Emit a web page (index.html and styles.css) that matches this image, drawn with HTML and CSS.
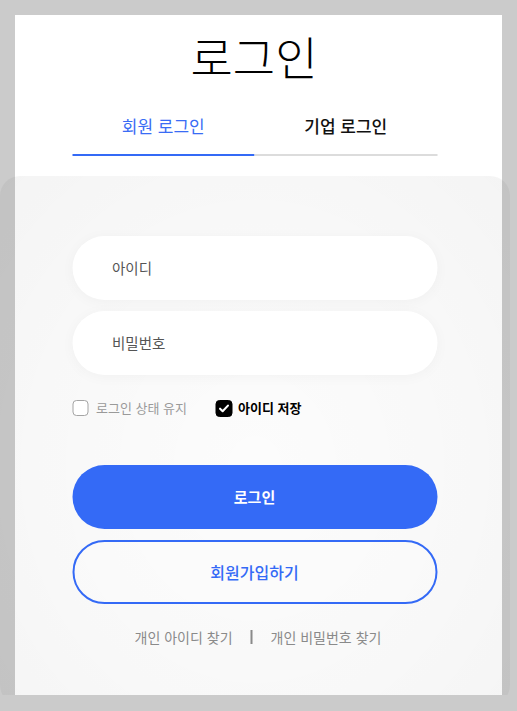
FILE: index.html
```html
<!DOCTYPE html>
<html lang="ko">
<head>
<meta charset="utf-8">
<title>로그인</title>
<link rel="stylesheet" href="styles.css">
</head>
<body>
<div class="card">
  <div class="wrap">
    <h1 class="title">로그인</h1>
    <div class="tabs">
      <div class="tab tab-active">회원 로그인</div>
      <div class="tab">기업 로그인</div>
    </div>
    <div class="panel">
      <div class="form">
        <div class="field">아이디</div>
        <div class="field">비밀번호</div>
        <div class="options">
          <label class="opt opt-off"><span class="box"></span>로그인 상태 유지</label>
          <label class="opt opt-on"><span class="box box-on"><svg width="11" height="9" viewBox="0 0 12 10"><path d="M1.6 5.2 4.5 8 10.4 1.8" fill="none" stroke="#fff" stroke-width="2.3" stroke-linecap="round" stroke-linejoin="round"/></svg></span>아이디 저장</label>
        </div>
        <div class="btn btn-primary">로그인</div>
        <div class="btn btn-outline">회원가입하기</div>
        <div class="links">
          <span class="link">개인 아이디 찾기</span>
          <span class="sep"></span>
          <span class="link">개인 비밀번호 찾기</span>
        </div>
      </div>
    </div>
  </div>
</div>
</body>
</html>
```
FILE: styles.css
```css
* { box-sizing: border-box; }
html, body { margin: 0; padding: 0; }
body {
  background: #cbcbcb;
  font-family: "Noto Sans CJK KR", "Noto Sans", sans-serif;
  overflow: hidden;
}
.card {
  margin: 15px 15px 0 15px;
  width: 487px;
  height: 680px;
  background: #fff;
}
.wrap {
  margin-left: -15px;
  width: 510px;
  padding-top: 12px;
}
.title {
  margin: 0;
  text-align: center;
  font-size: 46px;
  font-weight: 300;
  line-height: 56px;
  color: #000;
  padding-right: 2px;
}
.tabs {
  margin: 31px auto 0;
  width: 365px;
  display: flex;
  transform: translateX(-0.5px);
}
.tab {
  flex: 1;
  text-align: center;
  font-size: 17px;
  line-height: 24px;
  padding-bottom: 16px;
  border-bottom: 2px solid #dcdcdc;
  color: #111;
  font-weight: 500;
}
.tab-active {
  color: #3a6cf5;
  border-bottom-color: #346af6;
  font-weight: 400;
}
.panel {
  margin-top: 20px;
  height: 529px;
  border-radius: 20px;
  background:
    radial-gradient(ellipse at 50% 55%, rgba(0,0,0,0.01) 0%, rgba(0,0,0,0.028) 60%, rgba(0,0,0,0.045) 100%);
  padding-top: 60px;
}
.form {
  width: 365px;
  margin: 0 auto;
  transform: translateX(-0.5px);
}
.field {
  height: 64px;
  border-radius: 32px;
  background: #fff;
  box-shadow: 0 2px 14px rgba(0,0,0,0.035);
  padding-left: 40px;
  font-size: 14.5px;
  line-height: 64px;
  color: #555;
}
.field + .field { margin-top: 11px; }
.options {
  margin-top: 23px;
  height: 20px;
  display: flex;
  align-items: center;
  gap: 28px;
}
.opt {
  display: flex;
  align-items: center;
  line-height: 20px;
}
.opt-off { color: #9a9a9a; gap: 8px; font-size: 13px; }
.opt-on { color: #000; font-weight: 700; gap: 6px; font-size: 13px; }
.box {
  width: 16px;
  height: 16px;
  border: 1.5px solid #a4a4a4;
  border-radius: 4px;
  background: #fff;
  flex: none;
}
.box-on {
  width: 17px;
  height: 17px;
  background: #000;
  border-color: #000;
  display: flex;
  align-items: center;
  justify-content: center;
}
.btn {
  height: 64px;
  border-radius: 32px;
  text-align: center;
  font-size: 15px;
  font-weight: 700;
  line-height: 64px;
}
.btn-primary {
  margin-top: 47px;
  background: #346af6;
  color: #fff;
}
.btn-outline {
  margin-top: 11px;
  border: 2px solid #346af6;
  line-height: 60px;
  color: #346af6;
  font-weight: 500;
  font-size: 16px;
  background: rgba(255,255,255,0.2);
}
.links {
  margin-top: 23px;
  display: flex;
  justify-content: center;
  align-items: center;
  gap: 18px;
  font-size: 14px;
  line-height: 20px;
  color: #8a8a8a;
  padding-left: 7px;
}
.sep {
  width: 2px;
  height: 14px;
  background: #8a8a8a;
}
```
